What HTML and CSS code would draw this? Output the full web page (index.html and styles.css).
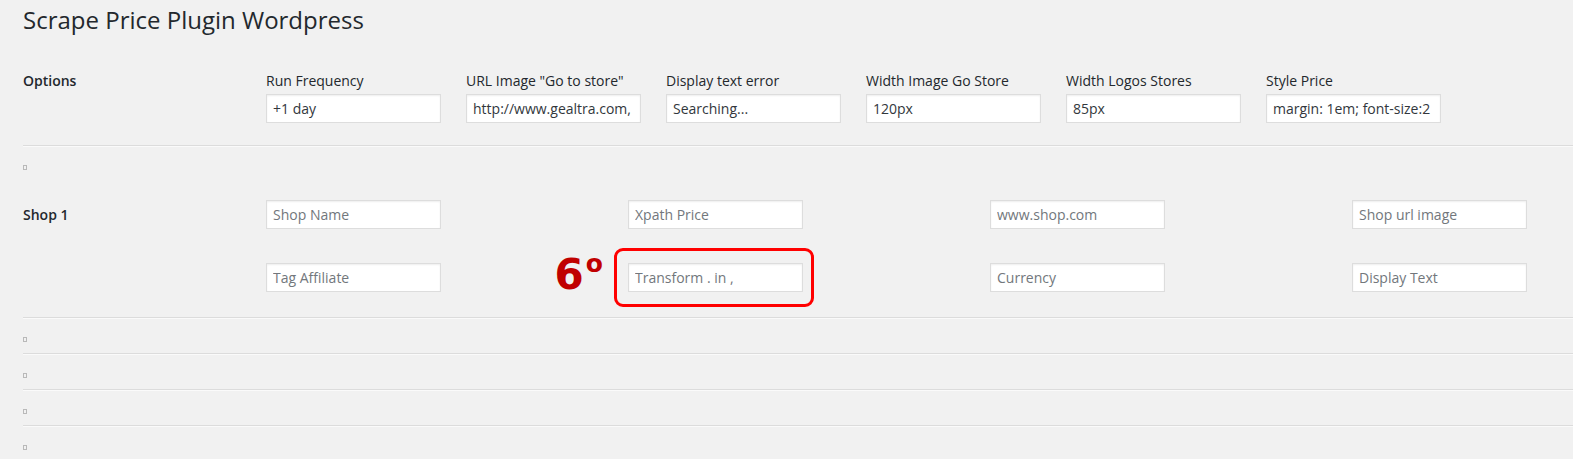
FILE: index.html
```html
<!DOCTYPE html>
<html>
<head>
<meta charset="utf-8">
<link rel="stylesheet" href="styles.css">
</head>
<body>
<div class="wrap">
  <h1 class="title">Scrape Price Plugin Wordpress</h1>

  <div class="options">
    <div class="row-label">Options</div>
    <div class="opt"><label>Run Frequency</label><input type="text" value="+1 day"></div>
    <div class="opt"><label>URL Image "Go to store"</label><input type="text" value="http://www.gealtra.com,"></div>
    <div class="opt"><label>Display text error</label><input type="text" value="Searching..."></div>
    <div class="opt"><label>Width Image Go Store</label><input type="text" value="120px"></div>
    <div class="opt"><label>Width Logos Stores</label><input type="text" value="85px"></div>
    <div class="opt"><label>Style Price</label><input type="text" value="margin: 1em; font-size:2"></div>
  </div>

  <hr class="sep">
  <div class="tofu-line"><span class="tofu"></span></div>

  <div class="shop">
    <div class="row-label shop-label">Shop 1</div>
    <div class="shop-grid">
      <input type="text" placeholder="Shop Name">
      <input type="text" placeholder="Xpath Price">
      <input type="text" placeholder="www.shop.com">
      <input type="text" placeholder="Shop url image">
      <input type="text" placeholder="Tag Affiliate">
      <div class="marked">
        <span class="step">6<span class="ord">o</span></span>
        <span class="redbox"></span>
        <input type="text" placeholder="Transform . in ,">
      </div>
      <input type="text" placeholder="Currency">
      <input type="text" placeholder="Display Text">
    </div>
  </div>

  <hr class="sep">
  <div class="tofu-line"><span class="tofu"></span></div>
  <hr class="sep">
  <div class="tofu-line"><span class="tofu"></span></div>
  <hr class="sep">
  <div class="tofu-line"><span class="tofu"></span></div>
  <hr class="sep">
  <div class="tofu-line"><span class="tofu"></span></div>
</div>
</body>
</html>
```

FILE: styles.css
```css
html, body {
  margin: 0;
  padding: 0;
  background: #f1f1f1;
}
body {
  font-family: "Open Sans", "Noto Sans", sans-serif;
  color: #23282d;
  font-size: 14px;
  overflow: hidden;
}
.wrap {
  padding-left: 23px;
}
.title {
  margin: 0;
  padding-top: 4px;
  font-size: 24px;
  font-weight: 400;
  line-height: 32px;
  color: #23282d;
}
.options {
  display: grid;
  grid-template-columns: 243px repeat(6, 200px);
  padding-top: 35px;
  padding-bottom: 22px;
}
.row-label {
  font-weight: 600;
  font-size: 14px;
  line-height: 20px;
  color: #23282d;
}
.opt {
  display: flex;
  flex-direction: column;
  gap: 3px;
}
.opt label {
  font-size: 14px;
  line-height: 20px;
  color: #23282d;
  white-space: nowrap;
}
input {
  box-sizing: border-box;
  width: 175px;
  height: 29px;
  margin: 0;
  padding: 0 6px;
  border: 1px solid #ddd;
  background: #fff;
  box-shadow: inset 0 1px 2px rgba(0,0,0,0.07);
  font-family: "Open Sans", "Noto Sans", sans-serif;
  font-size: 14px;
  color: #32373c;
  outline: none;
}
input::placeholder {
  color: #72777c;
  opacity: 1;
}
.sep {
  margin: 0;
  height: 0;
  border: 0;
  border-top: 1px solid #dcdcdc;
  border-bottom: 1px solid #fafafa;
}
.tofu-line {
  height: 34px;
  display: flex;
  align-items: center;
}
.tofu {
  display: inline-block;
  box-sizing: border-box;
  width: 4px;
  height: 5px;
  border: 1px solid #b9b9b9;
  margin-top: 6px;
}
.shop {
  display: grid;
  grid-template-columns: 243px 1fr;
  padding-top: 19px;
  padding-bottom: 25px;
}
.shop-label {
  padding-top: 5px;
}
.shop-grid {
  display: grid;
  grid-template-columns: repeat(3, 362px) 175px;
  row-gap: 34px;
}
.marked {
  position: relative;
  width: 175px;
  height: 29px;
}
.redbox {
  position: absolute;
  left: -14px;
  top: -15px;
  width: 200px;
  height: 59px;
  box-sizing: border-box;
  border: 3px solid #ff0000;
  border-radius: 9px;
}
.step {
  position: absolute;
  right: 200px;
  top: -13px;
  display: flex;
  align-items: flex-start;
  font-family: "DejaVu Sans", "Open Sans", sans-serif;
  font-weight: 700;
  font-size: 42px;
  line-height: 50px;
  color: #c00000;
  white-space: nowrap;
}
.ord {
  font-size: 25px;
  line-height: 25px;
  margin-left: 2px;
  margin-top: 1px;
}
```
